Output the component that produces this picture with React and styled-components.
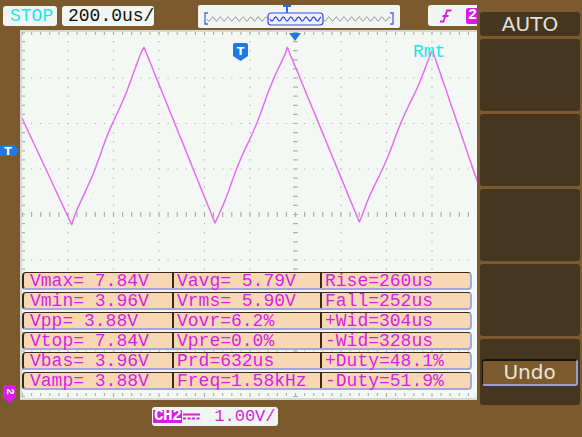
import React from 'react';
import styled, { createGlobalStyle } from 'styled-components';

const BROWN = '#7b5a2e';
const PANEL = '#46351f';
const SCREEN = '#f4f8f4';
const MAG = '#d81ee6';
const CYAN = '#1ee4ee';
const BLUE = '#1e78e6';
const PEACH = '#f8d8b4';
const GRID = '#adb1ad';
const MONO = `"Liberation Mono", "DejaVu Sans Mono", monospace`;
const SANS = `"DejaVu Sans", "Liberation Sans", sans-serif`;

const GlobalStyle = createGlobalStyle`
  html, body { margin: 0; padding: 0; background: ${BROWN}; overflow: hidden; }
  #root { width: 582px; height: 437px; }
`;

const Scope = styled.div`
  width: 582px;
  height: 437px;
  background: ${BROWN};
  display: flex;
  overflow: hidden;
`;

const Display = styled.div`
  position: relative;
  width: 477px;
  height: 437px;
  flex-shrink: 0;
  overflow: hidden;
  display: flex;
  flex-direction: column;
`;

const TopBar = styled.div`
  height: 30px;
  flex-shrink: 0;
  box-sizing: border-box;
  padding-top: 5px;
  display: flex;
  align-items: flex-start;
`;

const InfoBox = styled.div`
  flex-shrink: 0;
  box-sizing: border-box;
  margin-left: ${(p) => p.$ml}px;
  margin-top: ${(p) => p.$mt || 0}px;
  width: ${(p) => p.$w}px;
  height: ${(p) => p.$h}px;
  padding-left: ${(p) => p.$pl || 0}px;
  padding-top: 1px;
  background: #f2f6f2;
  border-radius: 3px;
  font-family: ${MONO};
  font-size: 18px;
  line-height: 19px;
  color: ${(p) => p.$color || '#101010'};
  white-space: nowrap;
  display: flex;
  align-items: flex-start;
`;

const OverviewBox = styled.div`
  flex-shrink: 0;
  margin-left: 44px;
  width: 202px;
  height: 23px;
  background: #f2f6f2;
  border-radius: 2px;
  display: flex;
`;

const TrigBox = styled.div`
  flex-shrink: 0;
  margin-left: 28px;
  width: 60px;
  height: 21px;
  background: #f2f6f2;
  border-radius: 3px;
  display: flex;
  align-items: center;
  padding-left: 12px;
  box-sizing: border-box;
  gap: 14px;
`;

const SourceTag = styled.span`
  background: ${MAG};
  color: #fff;
  font-family: ${MONO};
  font-size: 15px;
  font-weight: bold;
  line-height: 16px;
  padding: 0 2px;
  border-radius: 2px;
`;

const Screen = styled.div`
  position: relative;
  flex-shrink: 0;
  margin-left: 20px;
  width: 560px;
  height: 370px;
  box-sizing: border-box;
  border: 2px solid #d6dad6;
  background: ${SCREEN};
`;

const Graticule = styled.svg`
  position: absolute;
  left: 0;
  top: 0;
  display: block;
`;

const Remote = styled.span`
  position: absolute;
  left: 391px;
  top: 11px;
  font-family: ${MONO};
  font-size: 18px;
  line-height: 18px;
  color: ${CYAN};
`;

const Marker = styled.svg`
  position: absolute;
  left: ${(p) => p.$x}px;
  top: ${(p) => p.$y}px;
  display: block;
  overflow: visible;
`;

const Measures = styled.div`
  position: absolute;
  left: 0;
  top: 240px;
  width: 450px;
  display: flex;
  flex-direction: column;
  gap: 2px;
`;

const MeasureRow = styled.div`
  height: 18px;
  box-sizing: border-box;
  display: flex;
  align-items: center;
  background: ${PEACH};
  border-top: 1px solid #3c2814;
  border-left: 2px solid #3c2814;
  border-bottom: 2px solid #a6a6dc;
  border-right: 2px solid #a6a6dc;
  border-radius: 4px;
`;

const Cell = styled.div`
  width: ${(p) => p.$w}px;
  height: 15px;
  box-sizing: border-box;
  padding-left: ${(p) => p.$pl}px;
  ${(p) => (p.$sep ? 'border-left: 2px solid #3c2814;' : '')}
  font-family: ${MONO};
  font-size: 18px;
  line-height: 16px;
  color: ${MAG};
  white-space: pre;
  display: flex;
  align-items: center;
`;

const BottomBar = styled.div`
  flex: 1;
  display: flex;
  align-items: flex-start;
`;

const ChannelBox = styled.div`
  margin-left: 152px;
  margin-top: 7px;
  width: 126px;
  height: 19px;
  box-sizing: border-box;
  background: #f2f6f2;
  border-radius: 3px;
  display: flex;
  align-items: center;
  padding-left: 1px;
`;

const ChannelTag = styled.span`
  background: ${MAG};
  color: #fff;
  font-family: ${MONO};
  font-size: 16px;
  font-weight: bold;
  line-height: 13px;
  height: 13px;
  padding: 0 1px;
  letter-spacing: -0.5px;
`;

const Scale = styled.span`
  margin-left: 14px;
  font-family: ${MONO};
  font-size: 17px;
  line-height: 19px;
  color: ${MAG};
`;

const Menu = styled.div`
  margin-left: 3px;
  width: 100px;
  flex-shrink: 0;
  padding-top: 12px;
  display: flex;
  flex-direction: column;
  gap: 3px;
`;

const MenuButton = styled.div`
  height: ${(p) => p.$h}px;
  flex-shrink: 0;
  box-sizing: border-box;
  background: ${PANEL};
  border-radius: 3px;
  display: flex;
  flex-direction: column;
  align-items: center;
  padding-top: ${(p) => p.$pt || 0}px;
  font-family: ${SANS};
  font-size: 20px;
  line-height: 24px;
  color: #e4e0d6;
`;

const UndoButton = styled.div`
  width: 96px;
  height: 27px;
  box-sizing: border-box;
  background: ${BROWN};
  border-top: 2px solid #1a120a;
  border-left: 1px solid #1a120a;
  border-bottom: 2px solid #9c9cd0;
  border-right: 2px solid #9c9cd0;
  border-radius: 3px;
  text-align: center;
  font-family: ${SANS};
  font-size: 20px;
  line-height: 22px;
  color: #ece6da;
`;

/* ---------- drawings ---------- */

const DIV = 45.5;
const OX = 0.5;
const OY = 0.5;
const W = 556;
const H = 366;
const SUB = DIV / 5;

function tracePath(pts) {
  let d = '';
  let k = 1;
  for (let s = 0; s < pts.length - 1; s++) {
    const [x0, y0] = pts[s];
    const [x1, y1] = pts[s + 1];
    const n = Math.max(1, Math.round(Math.abs(x1 - x0) / 2.2));
    for (let i = s === 0 ? 0 : 1; i <= n; i++) {
      const t = i / n;
      const x = x0 + (x1 - x0) * t;
      const y = y0 + (y1 - y0) * t;
      const j = i === 0 || i === n ? 0 : Math.sin(k * 12.9898) * 0.9;
      k++;
      d += (d ? ' L' : 'M') + (x + j * 0.4).toFixed(1) + ',' + (y + j).toFixed(1);
    }
  }
  return d;
}

const WAVE = tracePath([
  [0, 86],
  [49.7, 192.7],
  [122, 15.3],
  [193, 191],
  [265.3, 15.3],
  [337.3, 190],
  [410.5, 18.5],
  [453, 142.7],
  [476, 205],
]);

function squig(x0, x1, y, amp, per) {
  let d = '';
  for (let x = x0; x <= x1 + 0.01; x += 0.5) {
    const v = y + amp * Math.sin(((x - x0) / per) * Math.PI * 2);
    d += (d ? ' L' : 'M') + x.toFixed(1) + ',' + v.toFixed(2);
  }
  return d;
}

function GridSvg() {
  const dash = `1.2 ${(SUB - 1.2).toFixed(2)}`;
  const lines = [];
  for (let i = 1; i < 12; i++) {
    if (i === 6) continue;
    const x = OX + i * DIV;
    lines.push(
      <line key={'v' + i} x1={x} x2={x} y1={OY - 0.6} y2={H} stroke={GRID} strokeWidth="1.2" strokeDasharray={dash} />
    );
  }
  for (let j = 1; j < 8; j++) {
    if (j === 4) continue;
    const y = OY + j * DIV;
    lines.push(
      <line key={'h' + j} y1={y} y2={y} x1={OX - 0.6} x2={W} stroke={GRID} strokeWidth="1.2" strokeDasharray={dash} />
    );
  }
  const cx = OX + 6 * DIV;
  const cy = OY + 4 * DIV;
  return (
    <Graticule width={W} height={H} viewBox={`0 0 ${W} ${H}`}>
      {lines}
      <line x1={cx} x2={cx} y1={OY - 0.6} y2={H} stroke={GRID} strokeWidth="5" strokeDasharray={dash} />
      <line y1={cy} y2={cy} x1={OX - 0.6} x2={W} stroke={GRID} strokeWidth="5" strokeDasharray={dash} />
      <line x1="1.5" x2="1.5" y1={OY - 0.6} y2={H} stroke={GRID} strokeWidth="3" strokeDasharray={dash} />
      <line y1="1.5" y2="1.5" x1={OX - 0.6} x2={W} stroke={GRID} strokeWidth="3" strokeDasharray={dash} />
      <line y1={H - 3.5} y2={H - 3.5} x1={OX - 0.6} x2={W} stroke={GRID} strokeWidth="3" strokeDasharray={dash} />
      <path d={WAVE} fill="none" stroke="#e46ef2" strokeWidth="1.5" strokeLinejoin="round" />
    </Graticule>
  );
}

function OverviewSvg() {
  return (
    <svg width="202" height="23" viewBox="0 0 202 23" style={{ display: 'block' }}>
      <path d="M10,8 H7 V19 H10" fill="none" stroke="#5060ea" strokeWidth="1.3" />
      <path d="M192,8 H195 V19 H192" fill="none" stroke="#5060ea" strokeWidth="1.3" />
      <path d={squig(9, 70, 14, 2, 7.6)} fill="none" stroke="#8a8a8a" strokeWidth="1" />
      <path d={squig(125, 193, 14, 2, 7.6)} fill="none" stroke="#8a8a8a" strokeWidth="1" />
      <rect x="70" y="8" width="55" height="12" rx="3" fill="#eef0fa" stroke="#3a48e4" strokeWidth="1.2" />
      <path d={squig(72, 123, 14, 2, 7.6)} fill="none" stroke="#2a36d8" strokeWidth="1.1" />
      <path d="M85,1 H93 M89,1 V8" fill="none" stroke="#2a6ae8" strokeWidth="2" />
    </svg>
  );
}

function EdgeIcon() {
  return (
    <svg width="12" height="14" viewBox="0 0 12 14" style={{ display: 'block' }}>
      <path d="M0,12.5 H3.5 L7,1.5 H11.5 M2.5,7 H8.5" fill="none" stroke={MAG} strokeWidth="1.8" />
    </svg>
  );
}

function DcIcon() {
  return (
    <svg width="17" height="8" viewBox="0 0 17 8" style={{ display: 'block', marginLeft: 1 }}>
      <path d="M0,1.5 H17" stroke={MAG} strokeWidth="2" />
      <path d="M0,5.5 H17" stroke={MAG} strokeWidth="2" strokeDasharray="3 1.5" />
    </svg>
  );
}

const ROWS = [
  ['Vmax= 7.84V', 'Vavg= 5.79V', 'Rise=260us'],
  ['Vmin= 3.96V', 'Vrms= 5.90V', 'Fall=252us'],
  ['Vpp= 3.88V', 'Vovr=6.2%', '+Wid=304us'],
  ['Vtop= 7.84V', 'Vpre=0.0%', '-Wid=328us'],
  ['Vbas= 3.96V', 'Prd=632us', '+Duty=48.1%'],
  ['Vamp= 3.88V', 'Freq=1.58kHz', '-Duty=51.9%'],
];

export default function App() {
  return (
    <>
      <GlobalStyle />
      <Scope>
        <Display>
          <TopBar>
            <InfoBox $ml={3} $mt={1} $w={54} $h={20} $pl={7} $color={CYAN}>STOP</InfoBox>
            <InfoBox $ml={5} $mt={1} $w={92} $h={20} $pl={6}>200.0us/</InfoBox>
            <OverviewBox>
              <OverviewSvg />
            </OverviewBox>
            <TrigBox>
              <EdgeIcon />
              <SourceTag>2</SourceTag>
            </TrigBox>
          </TopBar>

          <Screen>
            <GridSvg />
            <Marker $x={211} $y={11} width="15" height="18" viewBox="0 0 15 18">
              <path d="M2,0 H13 Q15,0 15,2 V13 L7.5,18 L0,13 V2 Q0,0 2,0 Z" fill={BLUE} />
              <text x="7.5" y="11.5" textAnchor="middle" fontFamily={SANS} fontWeight="bold" fontSize="11" fill="#fff">T</text>
            </Marker>
            <Marker $x={267} $y={1} width="12" height="8" viewBox="0 0 12 8">
              <path d="M0,0 H12 L6,8 Z" fill={BLUE} />
            </Marker>
            <Remote>Rmt</Remote>
            <Measures>
              {ROWS.map((r, i) => (
                <MeasureRow key={i}>
                  <Cell $w={148} $pl={6}>{r[0]}</Cell>
                  <Cell $w={148} $pl={3} $sep>{r[1]}</Cell>
                  <Cell $w={150} $pl={3} $sep>{r[2]}</Cell>
                </MeasureRow>
              ))}
            </Measures>
          </Screen>

          <BottomBar>
            <ChannelBox>
              <ChannelTag>CH2</ChannelTag>
              <DcIcon />
              <Scale>1.00V/</Scale>
            </ChannelBox>
          </BottomBar>

          <Marker $x={0} $y={145} width="19" height="11" viewBox="0 0 19 11">
            <path d="M0,0 H15 L19,5.5 L15,11 H0 Z" fill={BLUE} />
            <text x="8" y="9.5" textAnchor="middle" fontFamily={SANS} fontWeight="bold" fontSize="11" fill="#fff">T</text>
          </Marker>
          <Marker $x={3} $y={385} width="13" height="18" viewBox="0 0 13 18">
            <path d="M0,0 H13 V13 L6.5,18 L0,13 Z" fill={MAG} />
            <text x="6.5" y="6.5" textAnchor="middle" dominantBaseline="central" fontFamily={MONO} fontWeight="bold" fontSize="11" fill="#fff" transform="rotate(90 6.5 6.5)">2</text>
          </Marker>
        </Display>

        <Menu>
          <MenuButton $h={24}>AUTO</MenuButton>
          <MenuButton $h={72} />
          <MenuButton $h={72} />
          <MenuButton $h={72} />
          <MenuButton $h={72} />
          <MenuButton $h={66} $pt={20}>
            <UndoButton>Undo</UndoButton>
          </MenuButton>
        </Menu>
      </Scope>
    </>
  );
}
